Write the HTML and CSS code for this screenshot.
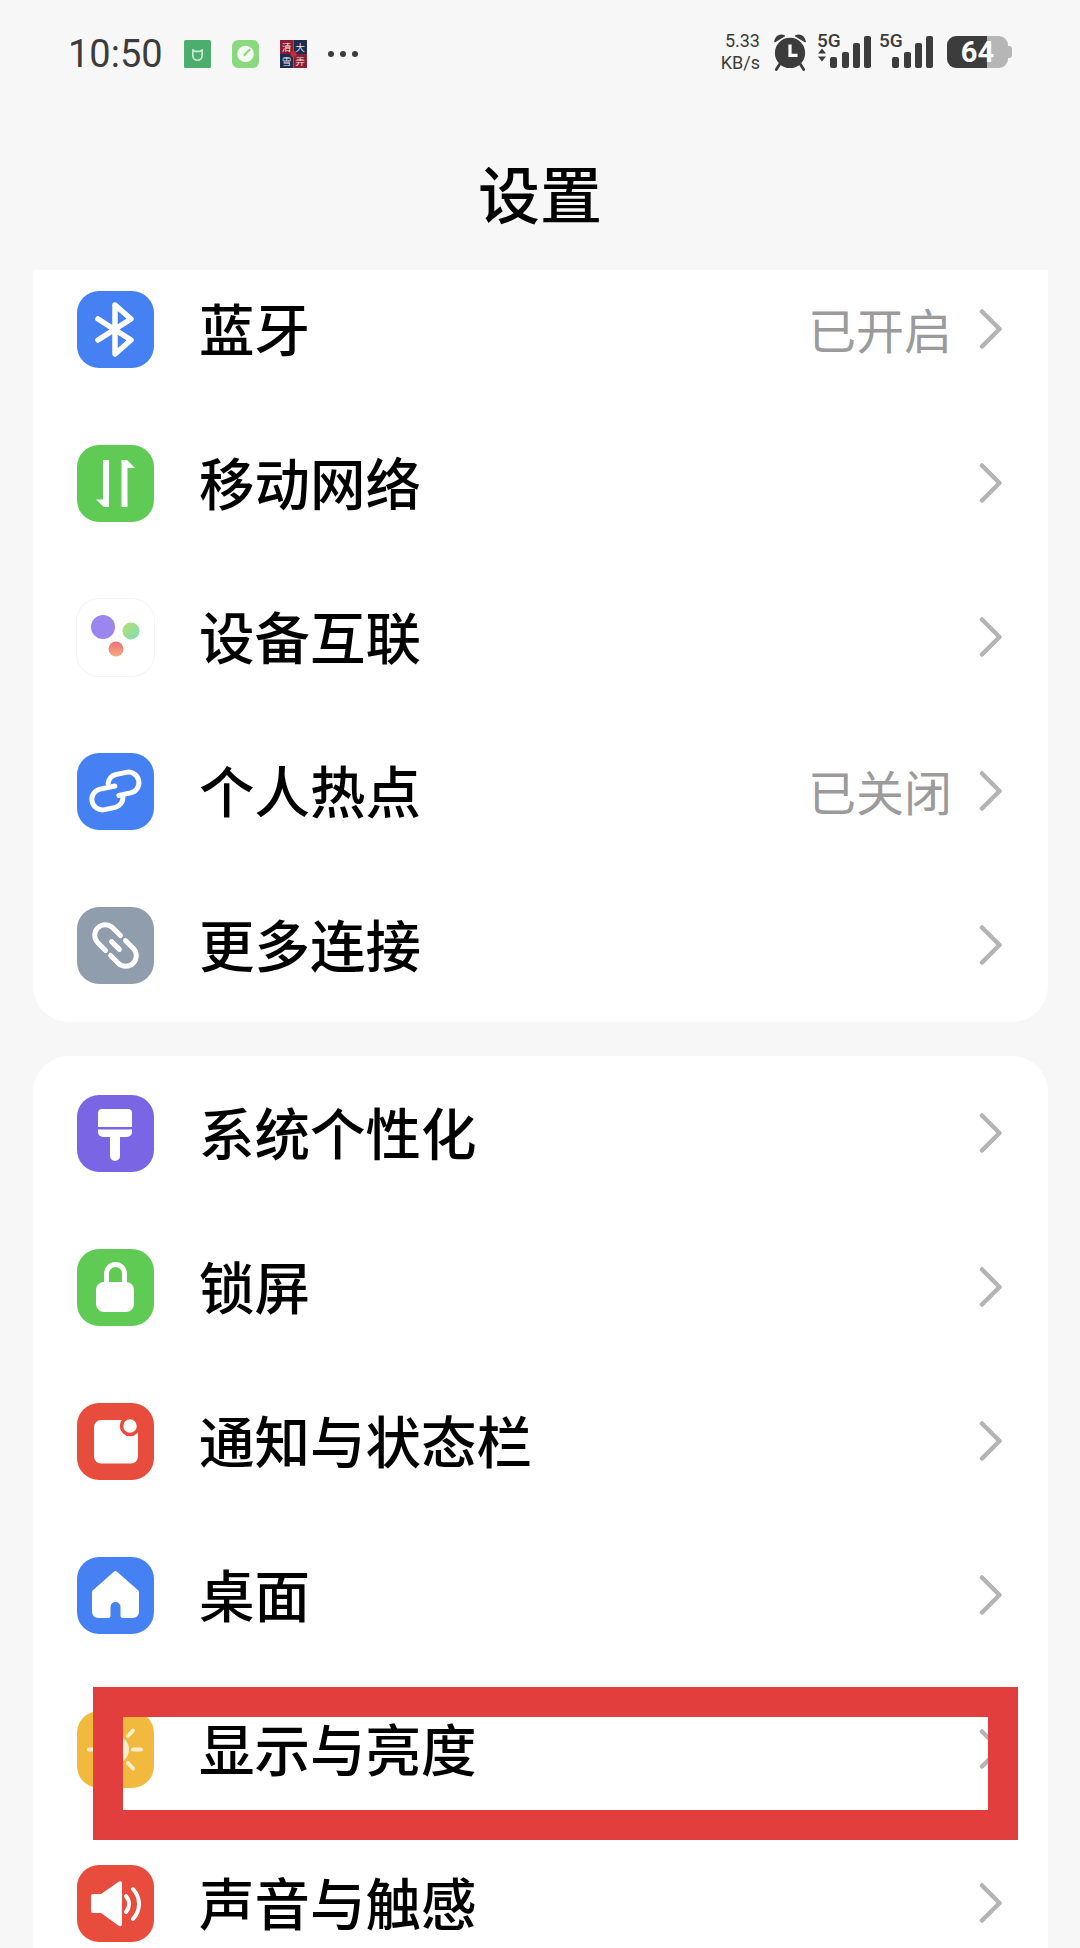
FILE: index.html
```html
<!DOCTYPE html>
<html lang="zh-CN">
<head>
    <meta charset="UTF-8">
    <meta name="viewport" content="width=device-width, initial-scale=1.0">
    <title>设置</title>

    <link rel="stylesheet" href="styles.css">
</head>
<body>
    <svg class="defs" width="0" height="0">
        <defs>
            <symbol id="chevron" viewBox="0 0 24 40">
                <path d="M3 2.5 L20.5 20 L3 37.5" fill="none" stroke="#b4b4b4" stroke-width="4.5" stroke-linecap="round" stroke-linejoin="round"/>
            </symbol>
            <linearGradient id="dotGreen" x1="0" y1="0" x2="1" y2="1">
                <stop offset="0" stop-color="#b5e06a"/>
                <stop offset="1" stop-color="#7fdcc0"/>
            </linearGradient>
            <linearGradient id="dotRed" x1="0" y1="0" x2="0" y2="1">
                <stop offset="0" stop-color="#ee6f78"/>
                <stop offset="1" stop-color="#f3ac7d"/>
            </linearGradient>
        </defs>
    </svg>

    <div class="status">
        <div class="status__left">
            <span class="status__time">10:50</span>
            <svg class="notif" viewBox="0 0 26 27">
                <rect width="26" height="27" rx="1.5" fill="#4bae6f"/>
                <path d="M8.5 9.500 L10.500 11 H15.500 L17.500 9.500 V15 a4.500 4.500 0 0 1 -9 0 Z" fill="none" stroke="#c9ecd5" stroke-width="1.6" stroke-linejoin="round"/>
            </svg>
            <svg class="notif" viewBox="0 0 26 27">
                <rect width="26" height="27" rx="6" fill="#8ad97f"/>
                <circle cx="13" cy="13.5" r="8" fill="#f4fbf2"/>
                <path d="M12 14.500 L17 9.500" stroke="#8ad97f" stroke-width="2" stroke-linecap="round"/>
            </svg>
            <svg class="notif" viewBox="0 0 26 27">
                <rect width="13" height="13.5" fill="#8a1f33"/>
                <rect x="13" width="13" height="13.5" fill="#1d2d52"/>
                <rect y="13.5" width="13" height="13.5" fill="#1d2d52"/>
                <rect x="13" y="13.5" width="13" height="13.5" fill="#8a1f33"/>
                <circle cx="13" cy="13.5" r="3" fill="#c9293a"/>
                <text class="notif__char" x="2" y="11">清</text>
                <text class="notif__char" x="15" y="11">大</text>
                <text class="notif__char" x="2" y="24">雪</text>
                <text class="notif__char" x="15" y="24">弄</text>
            </svg>
            <span class="dots"><i></i><i></i><i></i></span>
        </div>
        <div class="status__right">
            <div class="speed"><span>5.33</span><span>KB/s</span></div>
            <svg class="alarm" viewBox="0 0 36 40">
                <path d="M2 9 C3 3 8 1 12 3 Z M34 9 C33 3 28 1 24 3 Z" fill="#3c3c3c" stroke="#3c3c3c" stroke-width="1.5" stroke-linejoin="round"/>
                <path d="M7 33 L3.5 38.5 M29 33 L32.5 38.5" stroke="#3c3c3c" stroke-width="3" stroke-linecap="round"/>
                <circle cx="18" cy="21" r="16" fill="#3c3c3c"/>
                <path d="M18 12 V23.5 H26" fill="none" stroke="#fff" stroke-width="3.4"/>
            </svg>
            <div class="signal">
                <span class="signal__label">5G</span>
                <svg class="signal__bars" viewBox="0 0 54 32">
                    <path d="M0 11.5 L4 6.5 L8 11.5 Z M0 14.5 L4 19.5 L8 14.5 Z" transform="translate(1 6)" fill="#3c3c3c"/>
                    <rect x="13" y="21" width="7" height="11" rx="2" fill="#3c3c3c"/>
                    <rect x="25" y="16" width="7" height="16" rx="2" fill="#3c3c3c"/>
                    <rect x="36" y="7" width="7" height="25" rx="2" fill="#3c3c3c"/>
                    <rect x="47" y="0" width="7" height="32" rx="2" fill="#3c3c3c"/>
                </svg>
            </div>
            <div class="signal">
                <span class="signal__label">5G</span>
                <svg class="signal__bars" viewBox="0 0 54 32">
                    <rect x="13" y="21" width="7" height="11" rx="2" fill="#3c3c3c"/>
                    <rect x="25" y="16" width="7" height="16" rx="2" fill="#3c3c3c"/>
                    <rect x="36" y="7" width="7" height="25" rx="2" fill="#3c3c3c"/>
                    <rect x="47" y="0" width="7" height="32" rx="2" fill="#3c3c3c"/>
                </svg>
            </div>
            <div class="battery">
                <div class="battery__body"><span class="battery__level">64</span></div>
                <div class="battery__nub"></div>
            </div>
        </div>
    </div>

    <h1 class="title">设置</h1>

    <div class="card card_clipped">
        <div class="row">
            <div class="tile tile_blue">
                <svg viewBox="0 0 77 77"><path d="M21 28 L54 49 L38 63 V14 L54 28 L21 49" fill="none" stroke="#fff" stroke-width="5.500" stroke-linecap="round" stroke-linejoin="round"/></svg>
            </div>
            <span class="row__label">蓝牙</span>
            <span class="row__value">已开启</span>
            <svg class="chevron"><use href="#chevron"/></svg>
        </div>
        <div class="row">
            <div class="tile tile_green">
                <svg viewBox="0 0 77 77"><path d="M26 15 H32 V62 H27 L19 54.5 H26 Z M44.5 62 V15 H50 L58 23 H50.5 V62 Z" fill="#fff"/></svg>
            </div>
            <span class="row__label">移动网络</span>
            <svg class="chevron"><use href="#chevron"/></svg>
        </div>
        <div class="row">
            <div class="tile tile_white">
                <svg viewBox="0 0 77 77">
                    <circle cx="26" cy="28" r="12" fill="#9a86ee"/>
                    <circle cx="54" cy="32" r="8.5" fill="url(#dotGreen)"/>
                    <circle cx="39" cy="50" r="7.5" fill="url(#dotRed)"/>
                </svg>
            </div>
            <span class="row__label">设备互联</span>
            <svg class="chevron"><use href="#chevron"/></svg>
        </div>
        <div class="row">
            <div class="tile tile_blue">
                <svg viewBox="0 0 77 77">
                    <g transform="rotate(-12 38.5 38.5)" fill="none" stroke="#fff" stroke-width="5" stroke-linecap="round">
                        <path d="M33 29 A10.500 10.500 0 0 1 42 22 H53 A10.500 10.500 0 0 1 53 43 H41"/>
                        <path d="M39 33 H24 A10.500 10.500 0 0 0 24 54 H35 A10.500 10.500 0 0 0 44.500 46"/>
                    </g>
                </svg>
            </div>
            <span class="row__label">个人热点</span>
            <span class="row__value">已关闭</span>
            <svg class="chevron"><use href="#chevron"/></svg>
        </div>
        <div class="row">
            <div class="tile tile_gray">
                <svg viewBox="0 0 77 77">
                    <g transform="rotate(45 38.5 38.5)" fill="none" stroke="#fff" stroke-width="5" stroke-linecap="round">
                        <path d="M35 28 H24 A10.5 10.5 0 0 0 24 49 H35"/>
                        <path d="M42 28 H53 A10.5 10.5 0 0 1 53 49 H42"/>
                        <path d="M33 38.5 H44"/>
                    </g>
                </svg>
            </div>
            <span class="row__label">更多连接</span>
            <svg class="chevron"><use href="#chevron"/></svg>
        </div>
    </div>

    <div class="card">
        <div class="row">
            <div class="tile tile_purple">
                <svg viewBox="0 0 77 77"><path d="M25 14 H51 a4 4 0 0 1 4 4 V32 H21 V18 a4 4 0 0 1 4 -4 Z M21 34.5 H55 V37 a5 5 0 0 1 -5 5 H43 V61 a5 5 0 0 1 -10 0 V42 H26 a5 5 0 0 1 -5 -5 Z" fill="#fff"/></svg>
            </div>
            <span class="row__label">系统个性化</span>
            <svg class="chevron"><use href="#chevron"/></svg>
        </div>
        <div class="row">
            <div class="tile tile_green">
                <svg viewBox="0 0 77 77">
                    <path d="M29.5 35 V24.500 a9 9 0 0 1 18 0 V35" fill="none" stroke="#fff" stroke-width="5"/>
                    <rect x="19" y="33" width="38" height="30" rx="8" fill="#fff"/>
                </svg>
            </div>
            <span class="row__label">锁屏</span>
            <svg class="chevron"><use href="#chevron"/></svg>
        </div>
        <div class="row">
            <div class="tile tile_red">
                <svg viewBox="0 0 77 77">
                    <rect x="17" y="17" width="44" height="43.500" rx="7" fill="#fff"/>
                    <circle cx="53" cy="23" r="8.500" fill="#fff" stroke="#e84c3d" stroke-width="3.500"/>
                </svg>
            </div>
            <span class="row__label">通知与状态栏</span>
            <svg class="chevron"><use href="#chevron"/></svg>
        </div>
        <div class="row">
            <div class="tile tile_blue">
                <svg viewBox="0 0 77 77"><path d="M38.5 16 L60 35 V55 a4 4 0 0 1 -4 4 H45.500 V50 a7 7 0 0 0 -14 0 V59 H21 a4 4 0 0 1 -4 -4 V35 Z" fill="#fff" stroke="#fff" stroke-width="4" stroke-linejoin="round"/></svg>
            </div>
            <span class="row__label">桌面</span>
            <svg class="chevron"><use href="#chevron"/></svg>
        </div>
        <div class="row">
            <div class="tile tile_yellow">
                <svg viewBox="0 0 77 77">
                    <circle cx="38" cy="38.500" r="14" fill="#fbeecb"/>
                    <path d="M56 38.500 H64 M12 38.500 H17 M51 25 L56 19.500 M51 52 L56 57.500 M25 25 L20 19.500 M25 52 L20 57.500" stroke="#fbeecb" stroke-width="4" stroke-linecap="round"/>
                </svg>
            </div>
            <span class="row__label">显示与亮度</span>
            <svg class="chevron"><use href="#chevron"/></svg>
        </div>
        <div class="row">
            <div class="tile tile_red">
                <svg viewBox="0 0 77 77">
                    <path d="M16 29 H24 L42 16.500 a2 2 0 0 1 3 2 V59 a2 2 0 0 1 -3 2 L24 48 H16 a2 2 0 0 1 -2 -2 V31 a2 2 0 0 1 2 -2 Z" fill="#fff"/>
                    <path d="M49 31 C53 36 53 42 49 47 M56 24 C64 33 64 45 56 54" fill="none" stroke="#fff" stroke-width="4" stroke-linecap="round"/>
                </svg>
            </div>
            <span class="row__label">声音与触感</span>
            <svg class="chevron"><use href="#chevron"/></svg>
        </div>
    </div>

    <div class="highlight"></div>
</body>
</html>
```

FILE: styles.css
```css
body {
    position: relative;
    margin: 0;
    width: 1080px;
    height: 1948px;
    overflow: hidden;
    background: #f7f7f7;
    color: #000;
    font-family: "Noto Sans CJK SC", "Noto Sans", sans-serif;
}

.defs {
    position: absolute;
}

.status {
    display: flex;
    justify-content: space-between;
    align-items: center;
    height: 104px;
    padding: 0 68px;
    color: #3c3c3c;
    font-family: Roboto, sans-serif;
}

.status__left {
    display: flex;
    align-items: center;
    margin-top: 4px;
}

.status__time {
    width: 116px;
    font-size: 38px;
    line-height: 40px;
}

.notif {
    width: 27px;
    height: 28px;
    margin-right: 21px;
}

.notif__char {
    font-family: "Noto Sans CJK SC", sans-serif;
    font-size: 9px;
    fill: #f2e6e6;
}

.dots {
    display: flex;
    gap: 6px;
}

.dots i {
    width: 6px;
    height: 6px;
    border-radius: 50%;
    background: #3c3c3c;
}

.status__right {
    display: flex;
    align-items: center;
}

.speed {
    display: flex;
    flex-direction: column;
    align-items: flex-end;
    width: 44px;
    font-size: 18px;
    line-height: 22px;
}

.alarm {
    width: 34px;
    height: 38px;
    margin-left: 13px;
}

.signal {
    position: relative;
    width: 54px;
    height: 36px;
    margin-left: 10px;
}

.signal + .signal {
    margin-left: 8px;
}

.signal__label {
    position: absolute;
    top: -3px;
    left: 0;
    font-size: 19px;
    font-weight: 500;
    line-height: 20px;
}

.signal__bars {
    display: block;
    position: absolute;
    bottom: 2px;
    left: 0;
    width: 54px;
    height: 32px;
}

.battery {
    display: flex;
    align-items: center;
    margin-left: 14px;
}

.battery__body {
    width: 61px;
    height: 32px;
    border-radius: 9px;
    background: linear-gradient(to right, #3c3c3c 66%, #b6b6b6 66%);
    text-align: center;
}

.battery__level {
    color: #fff;
    font-size: 29px;
    font-weight: 700;
    line-height: 32px;
}

.battery__nub {
    width: 4px;
    height: 12px;
    border-radius: 0 3px 3px 0;
    background: #b6b6b6;
}

.title {
    height: 166px;
    margin: 0;
    font-size: 62px;
    font-weight: 500;
    line-height: 176px;
    text-align: center;
}

.card {
    margin: 0 32px 34px 33px;
    overflow: hidden;
    background: #fff;
    border-radius: 36px;
}

.card_clipped {
    border-radius: 0 0 36px 36px;
}

.card_clipped .row:first-child {
    margin-top: -18px;
}

.row {
    display: flex;
    align-items: center;
    height: 154px;
    padding: 0 45px 0 44px;
}

.tile {
    flex: none;
    width: 77px;
    height: 77px;
    margin-right: 45px;
    border-radius: 22px;
    box-sizing: border-box;
}

.tile svg {
    display: block;
    width: 77px;
    height: 77px;
}

.tile_blue { background: #4681f4; }
.tile_green { background: #5fcb55; }
.tile_gray { background: #909dad; }
.tile_purple { background: #7a66e4; }
.tile_red { background: #e84c3d; }
.tile_yellow { background: #f2b93f; }

.tile_white {
    background: #fff;
    box-shadow: 0 0 0 1px #f4f4f4;
}

.row__label {
    padding-bottom: 5px;
    font-size: 55.5px;
    font-weight: 500;
    line-height: 80px;
}

.row__value {
    margin-left: auto;
    padding-bottom: 3px;
    color: #9b9b9b;
    font-size: 48px;
    line-height: 80px;
}

.chevron {
    flex: none;
    width: 24px;
    height: 40px;
    margin-left: auto;
}

.row__value + .chevron {
    margin-left: 27px;
}

.highlight {
    position: absolute;
    top: 1687px;
    left: 93px;
    width: 865px;
    height: 93px;
    border: 30px solid #e23e3e;
}
```
